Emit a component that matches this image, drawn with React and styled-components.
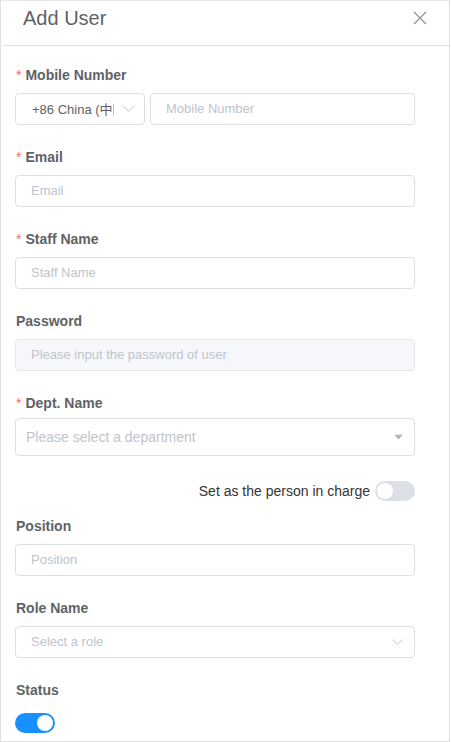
import React from 'react';
import styled, { createGlobalStyle } from 'styled-components';

const GlobalStyle = createGlobalStyle`
  html, body {
    margin: 0;
    padding: 0;
    background: #fff;
  }
  body {
    font-family: "Liberation Sans", Arial, "Noto Sans CJK SC", sans-serif;
  }
  * {
    box-sizing: border-box;
  }
`;

const Panel = styled.div`
  width: 450px;
  height: 742px;
  border: 1px solid #dcdfe6;
  border-top-color: #e8e8e8;
  background: #fff;
  overflow: hidden;
`;

const Header = styled.div`
  height: 45px;
  margin-left: 2px;
  padding: 7px 22px 0 20px;
  border-bottom: 1px solid #dcdfe6;
  display: flex;
  justify-content: space-between;
  align-items: flex-start;
`;

const Title = styled.div`
  font-size: 20px;
  line-height: 20px;
  color: #606266;
`;

const CloseButton = styled.button`
  border: none;
  background: none;
  padding: 0;
  margin-top: 3px;
  width: 14px;
  height: 14px;
  display: flex;
  cursor: pointer;
`;

const Body = styled.div`
  padding: 19px 0 0 14px;
  width: 414px;
`;

const Field = styled.div`
  margin-bottom: ${(p) => p.$mb ?? 22}px;
`;

const Label = styled.div`
  font-size: 14px;
  line-height: 20px;
  font-weight: bold;
  color: #606266;
  margin-bottom: ${(p) => p.$mb ?? 8}px;
  padding-left: 1px;

  &::before {
    content: ${(p) => (p.$required ? '"*"' : 'none')};
    color: #f56c6c;
    font-weight: normal;
    margin-right: 4px;
  }
`;

const Row = styled.div`
  display: flex;
  gap: 5px;
`;

const TextInput = styled.input`
  width: ${(p) => p.$width ?? 400}px;
  height: 32px;
  border: 1px solid ${(p) => (p.disabled ? '#e4e7ed' : '#dcdfe6')};
  border-radius: 4px;
  background: ${(p) => (p.disabled ? '#f5f7fa' : '#fff')};
  padding: 0 15px 1px;
  font-family: inherit;
  font-size: 13px;
  color: #606266;
  outline: none;

  &::placeholder {
    color: #c0c4cc;
  }
`;

const SelectBox = styled.div`
  position: relative;
  width: ${(p) => p.$width ?? 400}px;
  height: ${(p) => p.$height ?? 32}px;
  border: 1px solid #dcdfe6;
  border-radius: 4px;
  padding: 0 30px 1px ${(p) => p.$pl ?? 15}px;
  display: flex;
  align-items: center;
  font-size: ${(p) => p.$fs ?? 13}px;
  color: ${(p) => (p.$placeholder ? '#c0c4cc' : '#606266')};
  white-space: nowrap;
  overflow: hidden;
`;

const SelectText = styled.span`
  overflow: hidden;
  white-space: nowrap;
  display: block;
  width: 100%;
`;

const Arrow = styled.span`
  position: absolute;
  right: ${(p) => p.$right ?? 10}px;
  top: 50%;
  transform: translateY(-50%);
  display: flex;
`;

const ChargeRow = styled.div`
  display: flex;
  justify-content: flex-end;
  align-items: center;
  gap: 5px;
  width: 400px;
  height: 20px;
  margin-bottom: 15px;
  font-size: 14px;
  color: #333;
`;

const Switch = styled.div`
  position: relative;
  width: 40px;
  height: 20px;
  border-radius: 10px;
  background: ${(p) => (p.$on ? '#1890ff' : '#dcdfe6')};

  &::after {
    content: '';
    position: absolute;
    top: 2px;
    left: ${(p) => (p.$on ? '22px' : '2px')};
    width: 16px;
    height: 16px;
    border-radius: 50%;
    background: #fff;
  }
`;

const Chevron = ({ w = 11, h = 6 }) => (
  <svg width={w} height={h} viewBox="0 0 11 6" fill="none">
    <path d="M0.5 0.5 L5.5 5.3 L10.5 0.5" stroke="#c0c4cc" strokeWidth="1" />
  </svg>
);

const Caret = () => (
  <svg width="9" height="5" viewBox="0 0 9 5">
    <path d="M0 0 H9 L4.5 5 Z" fill="#b4b4b4" />
  </svg>
);

export default function App() {
  return (
    <>
      <GlobalStyle />
      <Panel>
        <Header>
          <Title>Add User</Title>
          <CloseButton aria-label="close">
            <svg width="14" height="14" viewBox="0 0 14 14">
              <path d="M1 1 L13 13 M13 1 L1 13" stroke="#909399" strokeWidth="1.3" />
            </svg>
          </CloseButton>
        </Header>
        <Body>
          <Field>
            <Label $required>Mobile Number</Label>
            <Row>
              <SelectBox $width={130} $pl={16}>
                <SelectText>+86 China (中国)</SelectText>
                <Arrow $right={10}>
                  <Chevron />
                </Arrow>
              </SelectBox>
              <TextInput $width={265} placeholder="Mobile Number" />
            </Row>
          </Field>
          <Field>
            <Label $required>Email</Label>
            <TextInput placeholder="Email" />
          </Field>
          <Field>
            <Label $required>Staff Name</Label>
            <TextInput placeholder="Staff Name" />
          </Field>
          <Field>
            <Label>Password</Label>
            <TextInput disabled placeholder="Please input the password of user" />
          </Field>
          <Field $mb={25}>
            <Label $required $mb={5}>Dept. Name</Label>
            <SelectBox $height={38} $pl={10} $fs={14} $placeholder>
              <SelectText>Please select a department</SelectText>
              <Arrow $right={11}>
                <Caret />
              </Arrow>
            </SelectBox>
          </Field>
          <ChargeRow>
            <span>Set as the person in charge</span>
            <Switch />
          </ChargeRow>
          <Field>
            <Label>Position</Label>
            <TextInput placeholder="Position" />
          </Field>
          <Field>
            <Label>Role Name</Label>
            <SelectBox $placeholder>
              <SelectText>Select a role</SelectText>
              <Arrow $right={11}>
                <Chevron />
              </Arrow>
            </SelectBox>
          </Field>
          <Field>
            <Label $mb={13}>Status</Label>
            <Switch $on />
          </Field>
        </Body>
      </Panel>
    </>
  );
}
